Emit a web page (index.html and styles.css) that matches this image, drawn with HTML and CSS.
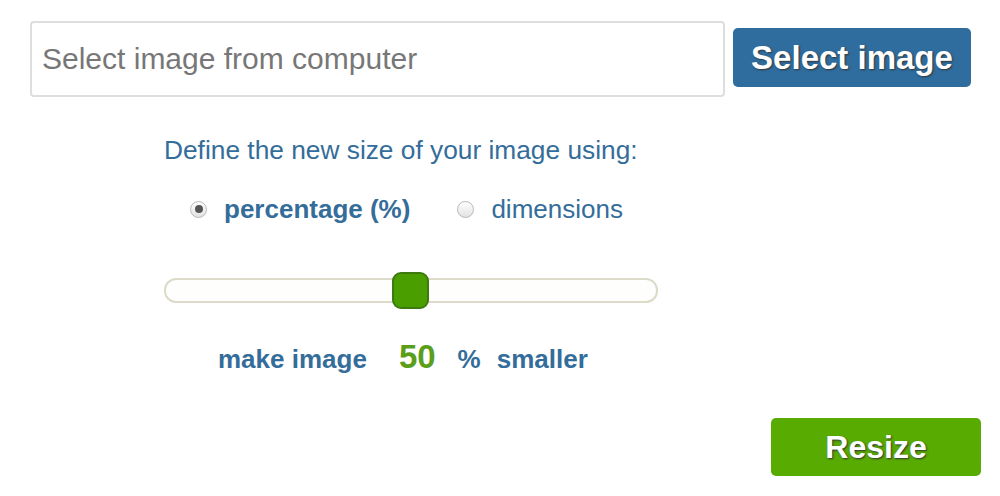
FILE: index.html
```html
<!DOCTYPE html>
<html lang="en">
<head>
<meta charset="utf-8">
<title>Resize image</title>
<link rel="stylesheet" href="styles.css">
</head>
<body>
<div class="top">
  <div class="file-input">Select image from computer</div>
  <button class="select-btn">Select image</button>
</div>
<div class="options">
  <p class="define">Define the new size of your image using:</p>
  <div class="radios">
    <span class="radio checked"></span>
    <span class="radio-label bold">percentage (%)</span>
    <span class="radio second"></span>
    <span class="radio-label">dimensions</span>
  </div>
  <div class="slider">
    <div class="track"></div>
    <div class="handle"></div>
  </div>
  <div class="make">
    <span class="make-text">make image</span>
    <span class="value">50</span>
    <span class="pct">%</span>
    <span class="make-text">smaller</span>
  </div>
</div>
<div class="actions">
  <button class="resize-btn">Resize</button>
</div>
</body>
</html>
```

FILE: styles.css
```css
* { box-sizing: border-box; }
body {
  margin: 0;
  font-family: "Liberation Sans", Arial, sans-serif;
  background: #fff;
}
.top {
  display: flex;
  align-items: flex-start;
  padding: 21px 0 0 30px;
  gap: 8px;
}
.file-input {
  width: 695px;
  height: 76px;
  border: 2px solid #dedede;
  border-radius: 4px;
  padding-left: 10px;
  display: flex;
  align-items: center;
  font-size: 30px;
  color: #777;
}
.select-btn {
  margin-top: 7px;
  width: 238px;
  height: 59px;
  border: none;
  border-radius: 5px;
  background: #2f6d9f;
  color: #fff;
  font-family: inherit;
  font-weight: bold;
  font-size: 33px;
  text-shadow: 1px 1px 2px #333;
  padding: 0;
}
.options {
  margin-left: 164px;
  color: #346d9a;
  font-size: 26px;
}
.define {
  margin: 38px 0 0;
  line-height: 30px;
  font-size: 26.3px;
}
.radios {
  margin-top: 29px;
  margin-left: 26px;
  display: flex;
  align-items: center;
  line-height: 30px;
}
.radio {
  width: 17px;
  height: 17px;
  border-radius: 50%;
  border: 1px solid #b8b8b8;
  background: linear-gradient(#ffffff, #e2e2e2);
  display: flex;
  align-items: center;
  justify-content: center;
}
.radio.checked::after {
  content: "";
  width: 8px;
  height: 8px;
  border-radius: 50%;
  background: #555;
}
.radio-label { margin-left: 17px; }
.radio-label.bold { font-weight: bold; }
.radio.second { margin-left: 47px; }
.slider {
  position: relative;
  margin-top: 48px;
  width: 494px;
  height: 37px;
  display: flex;
  align-items: center;
}
.track {
  width: 100%;
  height: 25px;
  border: 2px solid #dcdac8;
  border-radius: 12px;
  background: #fefefc;
}
.handle {
  position: absolute;
  left: 228px;
  top: 0;
  width: 37px;
  height: 37px;
  border-radius: 9px;
  background: #4b9e00;
  border: 2px solid #3d7a10;
}
.make {
  margin-top: 31px;
  margin-left: 54px;
  display: flex;
  align-items: baseline;
  font-weight: bold;
}
.make span { line-height: 1; }
.value {
  font-size: 33px;
  color: #5a9e1a;
  margin-left: 32px;
}
.pct { margin-left: 22px; }
.pct + .make-text { margin-left: 16px; }
.actions {
  display: flex;
  justify-content: flex-end;
  padding-right: 19px;
  margin-top: 45px;
}
.resize-btn {
  width: 210px;
  height: 58px;
  border: none;
  border-radius: 5px;
  background: #58ab00;
  color: #fff;
  font-family: inherit;
  font-weight: bold;
  font-size: 32px;
  text-shadow: 1px 1px 2px #333;
  padding: 0;
}
```
